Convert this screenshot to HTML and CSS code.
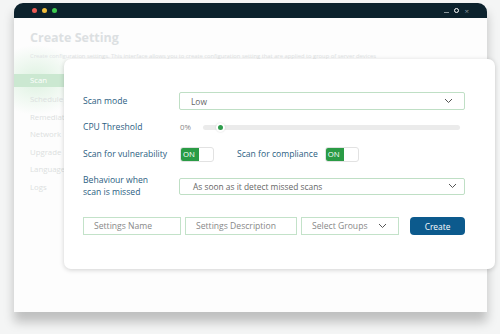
FILE: index.html
```html
<!DOCTYPE html>
<html lang="en">
<head>
  <meta charset="UTF-8" />
  <meta name="viewport" content="width=device-width, initial-scale=1" />
  <title>Create Setting</title>
  <link rel="stylesheet" href="styles.css">
</head>
<body>

  <div class="window">
    <div class="titlebar">
      <span class="dot red"></span>
      <span class="dot yellow"></span>
      <span class="dot green"></span>
      <div class="win-controls">
        <span class="min"></span>
        <span class="max"></span>
        <span class="close">&times;</span>
      </div>
    </div>

    <div class="window-body">
      <h1>Create Setting</h1>
      <p class="subtitle">Create configuration settings. This interface allows you to create configuration setting that are applied to group of server devices</p>

      <ul class="sidebar">
        <li class="active">Scan</li>
        <li>Schedule</li>
        <li>Remediation</li>
        <li>Network</li>
        <li>Upgrade</li>
        <li>Language</li>
        <li>Logs</li>
      </ul>
    </div>
  </div>

  <!-- settings card sits over the faded window -->
  <div class="card">
    <div class="row row-mode">
      <label>Scan mode</label>
      <div class="select">
        <span>Low</span>
        <svg width="9" height="6" viewBox="0 0 9 6"><polyline points="1,1 4.5,4.5 8,1" fill="none" stroke="#555" stroke-width="1"/></svg>
      </div>
    </div>

    <div class="row row-cpu">
      <label>CPU Threshold</label>
      <div class="slider">
        <span class="pct">0%</span>
        <div class="track"><span class="thumb"></span></div>
      </div>
    </div>

    <div class="row row-toggles">
      <label>Scan for vulnerability</label>
      <div class="toggles">
        <div class="toggle"><span class="on">ON</span></div>
        <span class="inline-label">Scan for compliance</span>
        <div class="toggle"><span class="on">ON</span></div>
      </div>
    </div>

    <div class="row row-missed">
      <label>Behaviour when<br>scan is missed</label>
      <div class="select">
        <span class="wide">As soon as it detect missed scans</span>
        <svg width="9" height="6" viewBox="0 0 9 6"><polyline points="1,1 4.5,4.5 8,1" fill="none" stroke="#555" stroke-width="1"/></svg>
      </div>
    </div>

    <div class="form-row">
      <div class="field f-name">Settings Name</div>
      <div class="field f-desc">Settings Description</div>
      <div class="field f-groups">
        <span>Select Groups</span>
        <svg width="9" height="6" viewBox="0 0 9 6"><polyline points="1,1 4.5,4.5 8,1" fill="none" stroke="#555" stroke-width="1"/></svg>
      </div>
      <button class="create">Create</button>
    </div>
  </div>

</body>
</html>
```

FILE: styles.css
```css
body {
  margin: 0;
  font-family: 'Open Sans', sans-serif;
  background: #f4f5f5;
  position: relative;
  width: 500px;
  height: 334px;
  overflow: hidden;
}

.window {
  margin: 3px 13px 0 14px;
  box-shadow: 0 10px 10px rgba(0, 0, 0, 0.22);
}

.titlebar {
  height: 15px;
  background: #0c222d;
  border-radius: 9px 9px 0 0;
  display: flex;
  align-items: center;
  padding: 0 0 0 18px;
}

.dot {
  width: 5px;
  height: 5px;
  border-radius: 50%;
  margin-right: 5px;
}

.red { background: #ec5b53; }
.yellow { background: #f2be3c; }
.green { background: #3dcc4f; }

.win-controls {
  margin-left: auto;
  margin-right: 18px;
  display: flex;
  align-items: center;
  gap: 5px;
}

.min {
  width: 5px;
  height: 1px;
  background: #8a979d;
  margin-top: 4px;
}

.max {
  width: 5px;
  height: 5px;
  border-radius: 50%;
  border: 1.5px solid #fff;
  box-sizing: border-box;
}

.close {
  color: #8a979d;
  font-size: 8px;
  line-height: 8px;
}

.window-body {
  height: 294px;
  background:
    radial-gradient(ellipse 45px 35px at 22px 62px, rgba(196, 233, 202, 0.55), rgba(255, 255, 255, 0)),
    #fdfdfd;
  padding: 12px 0 0 16px;
  box-sizing: border-box;
}

h1 {
  margin: 0;
  font-size: 12.5px;
  font-weight: 700;
  color: #dce0e2;
  line-height: 16px;
}

.subtitle {
  margin: 6px 0 0;
  font-size: 5.8px;
  color: #e0e3e4;
  line-height: 8px;
  white-space: nowrap;
}

.sidebar {
  list-style: none;
  margin: 14px 0 0 -16px;
  padding: 0;
  width: 56px;
}

.sidebar li {
  font-size: 7.8px;
  color: #dcdfe0;
  height: 17.5px;
  line-height: 17.5px;
  padding-left: 16px;
}

.sidebar li.active {
  background: #cbe8d1;
  color: #fff;
  height: 13px;
  line-height: 13px;
  margin-bottom: 4px;
}

.card {
  position: absolute;
  left: 64px;
  top: 59px;
  width: 431px;
  height: 210px;
  background: #fff;
  border-radius: 7px;
  box-shadow: 0 1px 5px rgba(0, 0, 0, 0.18);
  padding: 33px 30px 0 19px;
  box-sizing: border-box;
}

.row {
  display: flex;
  align-items: center;
}

.row label {
  width: 96px;
  flex-shrink: 0;
  font-size: 8.6px;
  line-height: 12px;
  color: #2b5e82;
}

.row-mode { height: 18px; }
.row-cpu { height: 14px; margin-top: 10px; }
.row-toggles { height: 16px; margin-top: 12px; }
.row-missed { height: 24px; margin-top: 12px; }

.select {
  flex: 1;
  height: 18px;
  border: 1px solid #bfdfc5;
  border-radius: 2px;
  box-sizing: border-box;
  display: flex;
  align-items: center;
  justify-content: space-between;
  padding: 0 11px;
  font-size: 8.4px;
  color: #666;
}

.row-missed .select {
  height: 17px;
  padding: 0 7px 0 13px;
}

.slider {
  flex: 1;
  display: flex;
  align-items: center;
  padding-left: 1px;
  padding-right: 5px;
}

.pct {
  font-size: 7.8px;
  color: #888;
  width: 23px;
}

.track {
  flex: 1;
  height: 5px;
  border-radius: 3px;
  background: #ebebeb;
  position: relative;
}

.thumb {
  position: absolute;
  left: 13px;
  top: -2px;
  width: 5px;
  height: 5px;
  border-radius: 50%;
  background: #2e9c4c;
  border: 2px solid #fff;
  box-shadow: 0 0 2px rgba(0, 0, 0, 0.15);
}

.toggles {
  display: flex;
  align-items: center;
  padding-left: 1px;
}

.toggle {
  width: 34px;
  height: 15px;
  border: 1px solid #e2e2e2;
  border-radius: 3px;
  box-sizing: border-box;
  display: flex;
  overflow: hidden;
}

.toggle .on {
  width: 18px;
  background: #2a9b45;
  color: #fff;
  font-size: 7.8px;
  line-height: 13px;
  padding-left: 2px;
  box-sizing: border-box;
}

.inline-label {
  font-size: 8.6px;
  color: #2b5e82;
  margin: 0 7px 0 23px;
}

.form-row {
  display: flex;
  align-items: center;
  margin-top: 19px;
  height: 18px;
}

.field {
  height: 18px;
  border: 1px solid #c3e2c9;
  box-sizing: border-box;
  font-size: 8.6px;
  color: #888;
  display: flex;
  align-items: center;
  padding-left: 10px;
  margin-right: 4px;
}

.f-name { width: 98px; }
.f-desc { width: 112px; }

.f-groups {
  width: 98px;
  justify-content: space-between;
  padding-right: 11px;
}

.create {
  margin-left: 7px;
  width: 55px;
  height: 18px;
  border: none;
  border-radius: 4px;
  background: #0c5a8d;
  color: #fff;
  font-family: 'Open Sans', sans-serif;
  font-size: 8.4px;
  padding: 0;
}
```
